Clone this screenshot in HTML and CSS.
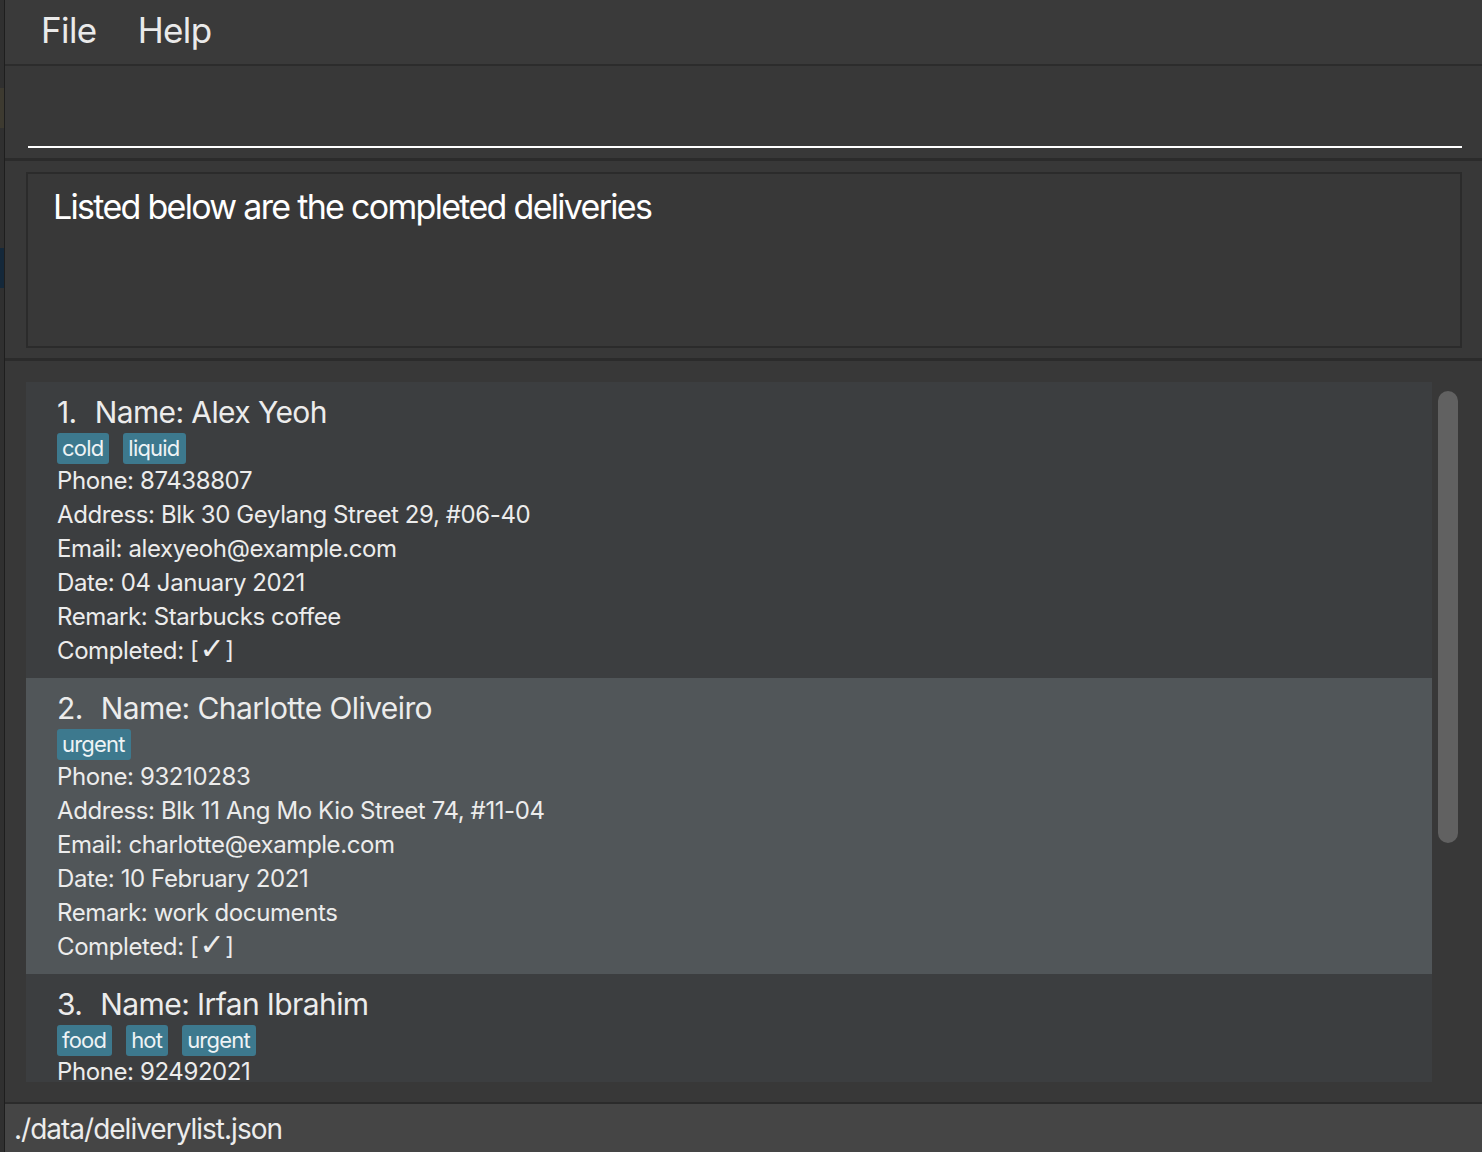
FILE: index.html
```html
<!DOCTYPE html>
<html>
<head>
<meta charset="utf-8">
<link rel="stylesheet" href="styles.css">
</head>
<body>
<div class="side">
  <div class="side-a"></div>
  <div class="side-b"></div>
</div>
<div class="app">
  <div class="menubar">
    <span class="menu-item">File</span>
    <span class="menu-item">Help</span>
  </div>
  <div class="command">
    <div class="command-input"></div>
  </div>
  <div class="result">
    <div class="result-box">Listed below are the completed deliveries</div>
  </div>
  <div class="list-pane">
    <div class="list">
      <div class="card">
        <div class="title"><span class="idx">1.</span>Name: Alex Yeoh</div>
        <div class="tags"><span class="tag">cold</span><span class="tag">liquid</span></div>
        <div class="line">Phone: 87438807</div>
        <div class="line">Address: Blk 30 Geylang Street 29, #06-40</div>
        <div class="line">Email: alexyeoh@example.com</div>
        <div class="line">Date: 04 January 2021</div>
        <div class="line">Remark: Starbucks coffee</div>
        <div class="line">Completed: [<span class="check">✓</span>]</div>
      </div>
      <div class="card alt">
        <div class="title"><span class="idx">2.</span>Name: Charlotte Oliveiro</div>
        <div class="tags"><span class="tag">urgent</span></div>
        <div class="line">Phone: 93210283</div>
        <div class="line">Address: Blk 11 Ang Mo Kio Street 74, #11-04</div>
        <div class="line">Email: charlotte@example.com</div>
        <div class="line">Date: 10 February 2021</div>
        <div class="line">Remark: work documents</div>
        <div class="line">Completed: [<span class="check">✓</span>]</div>
      </div>
      <div class="card last">
        <div class="title"><span class="idx">3.</span>Name: Irfan Ibrahim</div>
        <div class="tags"><span class="tag">food</span><span class="tag">hot</span><span class="tag">urgent</span></div>
        <div class="line">Phone: 92492021</div>
      </div>
    </div>
    <div class="scroll-track"><div class="scroll-thumb"></div></div>
  </div>
  <div class="status">./data/deliverylist.json</div>
</div>
</body>
</html>
```

FILE: styles.css
```css
*, *::before, *::after {
  box-sizing: border-box;
}
html, body {
  margin: 0;
  padding: 0;
  height: 100%;
}
body {
  display: flex;
  background: #2b2b2b;
  font-family: "Inter", "Liberation Sans", sans-serif;
  overflow: hidden;
}
.side {
  width: 5px;
  flex: none;
  background: #303030;
  border-right: 1px solid #1e1e1e;
  display: flex;
  flex-direction: column;
}
.side-a {
  margin-top: 88px;
  height: 40px;
  background: #3d3a30;
}
.side-b {
  margin-top: 120px;
  height: 40px;
  background: #14283a;
}
.app {
  flex: 1;
  display: flex;
  flex-direction: column;
  height: 1152px;
}
.menubar {
  height: 66px;
  flex: none;
  background: #3a3a3a;
  border-bottom: 2px solid #2c2c2c;
  display: flex;
  align-items: flex-start;
  padding-left: 36px;
  gap: 41px;
}
.menu-item {
  color: #eaeaea;
  font-size: 35px;
  letter-spacing: -0.6px;
  line-height: 60px;
}
.command {
  height: 95px;
  flex: none;
  background: #383838;
  border-bottom: 3px solid #2b2b2b;
  padding: 0 20px 0 23px;
}
.command-input {
  height: 82px;
  border-bottom: 2px solid #ffffff;
}
.result {
  flex: none;
  background: #383838;
  border-bottom: 3px solid #2b2b2b;
  padding: 11px 20px 10px 21px;
}
.result-box {
  height: 176px;
  border: 2px solid #2b2b2b;
  color: #ffffff;
  font-size: 34px;
  letter-spacing: -1.7px;
  padding: 13px 25px 0;
  line-height: 40px;
}
.list-pane {
  flex: 1;
  min-height: 0;
  background: #383838;
  display: flex;
  padding: 21px 24px 20px 21px;
  gap: 6px;
}
.list {
  flex: 1;
  overflow: hidden;
  display: flex;
  flex-direction: column;
}
.card {
  flex: none;
  background: #3c3e40;
  padding: 10px 31px 10px 31px;
  color: #ececec;
}
.card.alt {
  background: #515659;
}
.card.last {
  flex: 1;
  padding-bottom: 0;
}
.title {
  font-size: 30px;
  letter-spacing: -0.6px;
  height: 40px;
  line-height: 40px;
}
.idx {
  display: inline-block;
  margin-right: 18px;
}
.tags {
  display: flex;
  gap: 14px;
  margin-top: 1px;
  height: 31px;
}
.tag {
  background: #3d798e;
  color: #eef3f5;
  border-radius: 3px;
  font-size: 22px;
  letter-spacing: -0.8px;
  line-height: 31px;
  padding: 0 6px 0 5px;
}
.line {
  font-size: 24px;
  letter-spacing: -0.4px;
  height: 34px;
  line-height: 34px;
}
.card.last .line {
  height: 32px;
  line-height: 32px;
}
.check {
  font-family: "DejaVu Sans", sans-serif;
  font-size: 30px;
  line-height: 0;
  margin: 0 1px;
}
.scroll-track {
  width: 20px;
  flex: none;
  padding-top: 9px;
}
.scroll-thumb {
  height: 452px;
  background: #616161;
  border-radius: 10px;
}
.status {
  height: 50px;
  flex: none;
  background: #454545;
  border-top: 2px solid #2b2b2b;
  color: #ececec;
  font-size: 28px;
  letter-spacing: -1px;
  line-height: 50px;
  padding-left: 9px;
}
```
